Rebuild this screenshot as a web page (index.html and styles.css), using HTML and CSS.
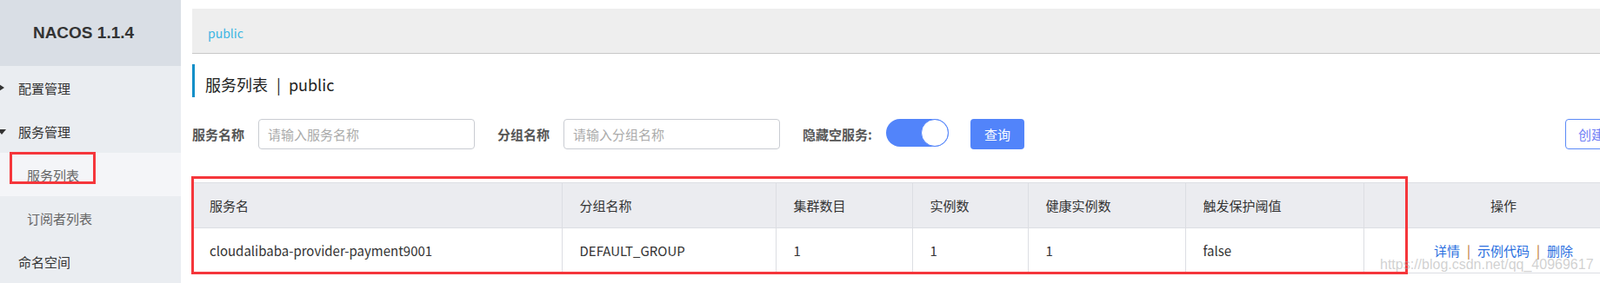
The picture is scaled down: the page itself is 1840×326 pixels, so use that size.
FILE: index.html
```html
<!DOCTYPE html>
<html lang="zh-CN">
<head>
  <meta charset="UTF-8">
  <title>NACOS 服务列表</title>
  <link rel="stylesheet" href="styles.css">
</head>
<body>
  <div class="layout">
    <!-- 左侧菜单 -->
    <aside class="sidebar">
      <div class="logo">NACOS 1.1.4</div>
      <ul class="menu">
        <li class="menu-item"><span class="arrow arrow-right"></span>配置管理</li>
        <li class="menu-item"><span class="arrow arrow-down"></span>服务管理</li>
        <li class="menu-item sub active">服务列表</li>
        <li class="menu-item sub">订阅者列表</li>
        <li class="menu-item">命名空间</li>
      </ul>
    </aside>

    <!-- 主体 -->
    <main class="main">
      <div class="content">
        <div class="breadcrumb">public</div>

        <div class="page-title">服务列表<span class="title-sep">|</span>public</div>

        <div class="search-row">
          <label class="field-label">服务名称</label>
          <input class="field-input" type="text" placeholder="请输入服务名称">
          <label class="field-label">分组名称</label>
          <input class="field-input" type="text" placeholder="请输入分组名称">
          <label class="field-label">隐藏空服务:</label>
          <span class="switch"><span class="knob"></span></span>
          <button class="btn btn-primary">查询</button>
          <button class="btn btn-outline">创建服务</button>
        </div>

        <table class="service-table">
          <colgroup>
            <col style="width: 425px">
            <col style="width: 246px">
            <col style="width: 157px">
            <col style="width: 133px">
            <col style="width: 181px">
            <col style="width: 205px">
            <col style="width: 322px">
          </colgroup>
          <thead>
            <tr>
              <th>服务名</th>
              <th>分组名称</th>
              <th>集群数目</th>
              <th>实例数</th>
              <th>健康实例数</th>
              <th>触发保护阈值</th>
              <th class="center">操作</th>
            </tr>
          </thead>
          <tbody>
            <tr>
              <td>cloudalibaba-provider-payment9001</td>
              <td>DEFAULT_GROUP</td>
              <td>1</td>
              <td>1</td>
              <td>1</td>
              <td>false</td>
              <td class="center">
                <a class="op-link">详情</a><span class="sep">|</span><a class="op-link">示例代码</a><span class="sep">|</span><a class="op-link">删除</a>
              </td>
            </tr>
          </tbody>
        </table>
      </div>
    </main>
  </div>

  <!-- 标注框与水印 -->
  <div class="mark mark-menu"></div>
  <div class="mark mark-table"></div>
  <div class="watermark">https://blog.csdn.net/qq_40969617</div>
</body>
</html>
```

FILE: styles.css
```css
body {
  margin: 0;
  height: 326px;
  overflow: hidden;
  position: relative;
  font-family: "Noto Sans CJK SC", "Noto Sans", sans-serif;
  font-size: 15px;
  color: #333;
  background: #fff;
}
.layout {
  display: flex;
  height: 326px;
}

/* 左侧菜单 */
.sidebar {
  width: 208px;
  flex-shrink: 0;
  background: #eaedf1;
}
.logo {
  height: 76px;
  background: #d9dee5;
  font-family: "Liberation Sans", Arial, sans-serif;
  font-weight: bold;
  font-size: 19px;
  color: #333;
  display: flex;
  align-items: center;
  justify-content: center;
  padding-right: 16px;
  box-sizing: border-box;
}
.menu {
  list-style: none;
  margin: 0;
  padding: 0;
}
.menu-item {
  height: 50px;
  display: flex;
  align-items: center;
  padding-left: 21px;
  position: relative;
  color: #333;
}
.menu-item.sub {
  padding-left: 31px;
  color: #666;
}
.menu-item.active { background: #f4f5f8; }
.arrow {
  position: absolute;
  left: 0;
  width: 0;
  height: 0;
}
.arrow-right {
  left: -4px;
  border-left: 9px solid #333;
  border-top: 6px solid transparent;
  border-bottom: 6px solid transparent;
}
.arrow-down {
  left: -3px;
  margin-top: 2px;
  border-top: 6px solid #333;
  border-left: 5px solid transparent;
  border-right: 5px solid transparent;
}

/* 主体 */
.main {
  flex: 1;
  min-width: 0;
  overflow: hidden;
  padding: 10px 0 0 13px;
}
.content { width: 1669px; }
.breadcrumb {
  height: 51px;
  line-height: 56px;
  overflow: hidden;
  background: #eeeeee;
  border-bottom: 1px solid #c8c8c8;
  padding-left: 18px;
  font-size: 14px;
  color: #3cb6e3;
}
.page-title {
  margin-top: 12px;
  height: 34px;
  padding-top: 4px;
  line-height: 38px;
  border-left: 3px solid #0f8fc8;
  padding-left: 12px;
  font-size: 18px;
  color: #222;
}
.title-sep { margin: 0 9px 0 10px; }

.search-row {
  margin-top: 25px;
  display: flex;
  align-items: flex-start;
  height: 35px;
}
.field-label {
  font-weight: bold;
  color: #555;
  line-height: 35px;
  margin-right: 16px;
}
.field-input {
  width: 249px;
  height: 35px;
  box-sizing: border-box;
  border: 1px solid #c9ccd2;
  border-radius: 4px;
  padding: 0 10px;
  font-family: inherit;
  font-size: 15px;
  margin-right: 26px;
  outline: none;
}
.field-input::placeholder { color: #aaa; }
.switch {
  width: 72px;
  height: 32px;
  border-radius: 16px;
  background: #5284fa;
  position: relative;
  margin-right: 25px;
}
.knob {
  position: absolute;
  right: 0;
  top: 0;
  width: 30px;
  height: 30px;
  border-radius: 50%;
  background: #fff;
  border: 1px solid #5284fa;
}
.btn {
  height: 35px;
  border-radius: 4px;
  font-family: inherit;
  font-size: 15px;
  padding: 0;
  cursor: pointer;
}
.btn-primary {
  width: 62px;
  background: #5284fa;
  border: none;
  color: #fff;
}
.btn-outline {
  width: 90px;
  margin-left: auto;
  background: #fff;
  border: 1px solid #5b8af7;
  color: #6f7ef5;
}

/* 表格 */
.service-table {
  margin-top: 38px;
  width: 1669px;
  table-layout: fixed;
  border-collapse: collapse;
}
.service-table th,
.service-table td {
  height: 51px;
  padding: 0 20px;
  text-align: left;
  border: 1px solid #dcdee3;
  font-weight: normal;
  white-space: nowrap;
}
.service-table th {
  background: #ebecf0;
  color: #333;
}
.service-table th:first-child,
.service-table td:first-child { border-left: none; }
.service-table .center { text-align: center; }
.op-link { color: #2a6fe0; }
.sep {
  color: #b8702a;
  margin: 0 8px;
}

/* 标注 */
.mark {
  position: absolute;
  border: 3px solid #f5363b;
  box-sizing: border-box;
}
.mark-menu {
  left: 11px;
  top: 175px;
  width: 99px;
  height: 37px;
}
.mark-table {
  left: 220px;
  top: 203px;
  width: 1399px;
  height: 113px;
}
.watermark {
  position: absolute;
  left: 1587px;
  top: 296px;
  font-family: "Liberation Sans", Arial, sans-serif;
  font-size: 16px;
  color: rgba(170, 170, 170, 0.55);
  white-space: nowrap;
}
```
